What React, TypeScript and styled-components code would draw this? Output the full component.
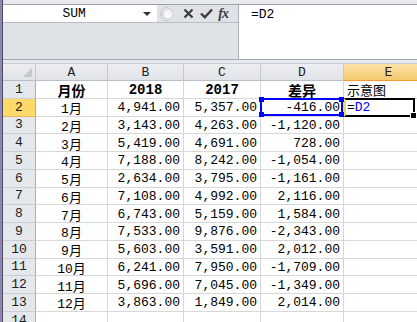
import React from 'react'
import styled, { createGlobalStyle, css } from 'styled-components'

const GlobalStyle = createGlobalStyle`
  html, body {
    margin: 0;
    padding: 0;
    background: #ffffff;
    overflow: hidden;
  }
  #root {
    width: 417px;
    height: 322px;
  }
`

const FONT = `"Liberation Mono", "Noto Sans CJK SC", monospace`

type Row = [string, string, string, string]

const rows: Row[] = [
  ['1月', '4,941.00', '5,357.00', '-416.00'],
  ['2月', '3,143.00', '4,263.00', '-1,120.00'],
  ['3月', '5,419.00', '4,691.00', '728.00'],
  ['4月', '7,188.00', '8,242.00', '-1,054.00'],
  ['5月', '2,634.00', '3,795.00', '-1,161.00'],
  ['6月', '7,108.00', '4,992.00', '2,116.00'],
  ['7月', '6,743.00', '5,159.00', '1,584.00'],
  ['8月', '7,533.00', '9,876.00', '-2,343.00'],
  ['9月', '5,603.00', '3,591.00', '2,012.00'],
  ['10月', '6,241.00', '7,950.00', '-1,709.00'],
  ['11月', '5,696.00', '7,045.00', '-1,349.00'],
  ['12月', '3,863.00', '1,849.00', '2,014.00'],
]

const COLS = ['A', 'B', 'C', 'D', 'E']

export default function App() {
  return (
    <>
      <GlobalStyle />
      <Window>
        <LeftEdge />
        <Main>
          <TopStrip />
          <FormulaBar>
            <Controls>
              <NameRow>
                <NameBox>
                  <NameText>SUM</NameText>
                  <DropArrow />
                </NameBox>
                <Splitter>
                  <svg width="14" height="16" viewBox="0 0 14 16">
                    <path d="M9 1 A7 7 0 0 0 9 15" fill="#eef0f3" stroke="#b9bec6" />
                    <circle cx="9" cy="8" r="5" fill="#f4f5f7" stroke="#c7ccd3" />
                    <rect x="6" y="9" width="6" height="1.5" fill="#ffffff" />
                  </svg>
                </Splitter>
                <ToolButton>
                  <svg width="11" height="11" viewBox="0 0 11 11">
                    <path d="M1.5 1.5 L9.5 9.5 M9.5 1.5 L1.5 9.5" stroke="#3c3c3c" strokeWidth="2.2" />
                  </svg>
                </ToolButton>
                <ToolButton>
                  <svg width="13" height="11" viewBox="0 0 13 11">
                    <path d="M1 5.5 L4.8 9.2 L12 1.5" stroke="#3c3c3c" strokeWidth="2.4" fill="none" />
                  </svg>
                </ToolButton>
                <FxButton>fx</FxButton>
              </NameRow>
            </Controls>
            <FormulaInput>=D2</FormulaInput>
          </FormulaBar>
          <Divider />
          <Sheet>
            <Corner>
              <CornerTriangle />
            </Corner>
            {COLS.map((c) => (
              <ColHead key={c} $active={c === 'E'}>
                {c}
              </ColHead>
            ))}

            <RowHead>1</RowHead>
            <Cell $align="center" $bold>月份</Cell>
            <Cell $align="center" $bold>2018</Cell>
            <Cell $align="center" $bold>2017</Cell>
            <Cell $align="center" $bold>差异</Cell>
            <Cell $align="left">示意图</Cell>

            {rows.map((r, i) => {
              const n = i + 2
              return (
                <React.Fragment key={n}>
                  <RowHead $active={n === 2}>{n}</RowHead>
                  <Cell $align="center">{r[0]}</Cell>
                  <Cell $align="right">{r[1]}</Cell>
                  <Cell $align="right">{r[2]}</Cell>
                  <Cell $align="right">
                    {r[3]}
                    {n === 2 && (
                      <RefBox>
                        <Handle $pos="tl" />
                        <Handle $pos="tr" />
                        <Handle $pos="bl" />
                        <Handle $pos="br" />
                      </RefBox>
                    )}
                  </Cell>
                  {n === 2 ? (
                    <Cell $align="left">
                      =<RefText>D2</RefText>
                      <ActiveBox>
                        <FillHandle />
                      </ActiveBox>
                    </Cell>
                  ) : (
                    <Cell $align="left" />
                  )}
                </React.Fragment>
              )
            })}

            <RowHead>14</RowHead>
            <Cell $align="left" />
            <Cell $align="left" />
            <Cell $align="left" />
            <Cell $align="left" />
            <Cell $align="left" />
          </Sheet>
        </Main>
      </Window>
    </>
  )
}

const Window = styled.div`
  display: flex;
  width: 417px;
  height: 322px;
  overflow: hidden;
  background: #ffffff;
`

const LeftEdge = styled.div`
  width: 2px;
  flex: none;
  background: #8f86b8;
  border-right: 1px solid #4c4c55;
`

const Main = styled.div`
  flex: 1;
  min-width: 0;
  display: flex;
  flex-direction: column;
`

const TopStrip = styled.div`
  height: 4px;
  flex: none;
  background: #e7e9ed;
  border-bottom: 1px solid #9ba2ab;
`

const FormulaBar = styled.div`
  height: 54px;
  flex: none;
  display: flex;
  background: #dfe3e8;
`

const Controls = styled.div`
  width: 235px;
  flex: none;
  display: flex;
  flex-direction: column;
`

const NameRow = styled.div`
  height: 17px;
  display: flex;
  align-items: center;
  border-bottom: 1px solid #b8bec6;
`

const NameBox = styled.div`
  width: 157px;
  height: 100%;
  display: flex;
  align-items: center;
  background: #ffffff;
`

const NameText = styled.div`
  flex: 1;
  text-align: center;
  font-family: "Liberation Mono", monospace;
  font-size: 13px;
  color: #000000;
  padding-left: 2px;
`

const DropArrow = styled.div`
  width: 0;
  height: 0;
  margin-right: 6px;
  border-left: 4px solid transparent;
  border-right: 4px solid transparent;
  border-top: 4px solid #333333;
`

const Splitter = styled.div`
  width: 22px;
  height: 100%;
  display: flex;
  align-items: center;
  padding-left: 2px;
  box-sizing: border-box;
`

const ToolButton = styled.div`
  width: 19px;
  height: 100%;
  display: flex;
  align-items: center;
  justify-content: center;
`

const FxButton = styled.div`
  width: 20px;
  padding-left: 2px;
  font-family: "Liberation Serif", serif;
  font-style: italic;
  font-weight: bold;
  font-size: 14px;
  color: #3c3c3c;
  letter-spacing: -1px;
`

const FormulaInput = styled.div`
  flex: 1;
  background: #ffffff;
  border-left: 1px solid #a9b0b8;
  padding: 1px 0 0 12px;
  font-family: ${FONT};
  font-size: 13px;
  line-height: 17px;
  color: #000000;
`

const Divider = styled.div`
  height: 3px;
  flex: none;
  background: #e6e9ed;
  border-top: 1px solid #a3a9b1;
  border-bottom: 1px solid #c8ccd2;
`

const Sheet = styled.div`
  flex: 1;
  display: grid;
  grid-template-columns: 33px 72px 76px 77px 83px 90px;
  grid-template-rows: 17px;
  grid-auto-rows: 17.75px;
  overflow: hidden;
  font-family: ${FONT};
  font-size: 13px;
  color: #000000;
`

const headBase = css`
  box-sizing: border-box;
  display: flex;
  align-items: center;
  justify-content: center;
  background: linear-gradient(#eceef1, #e0e3e8);
  border-right: 1px solid #c5cad1;
  border-bottom: 1px solid #b9bfc7;
  color: #222222;
`

const Corner = styled.div`
  ${headBase};
  position: relative;
`

const CornerTriangle = styled.div`
  position: absolute;
  right: 3px;
  bottom: 3px;
  width: 0;
  height: 0;
  border-left: 9px solid transparent;
  border-bottom: 9px solid #c3c8cf;
`

const ColHead = styled.div<{ $active?: boolean }>`
  ${headBase};
  ${({ $active }) =>
    $active &&
    css`
      background: linear-gradient(#fbe3a8, #f4c96d);
      border-right-color: #e9b65a;
      border-bottom: 1px solid #f29b38;
    `}
`

const RowHead = styled.div<{ $active?: boolean }>`
  ${headBase};
  background: #e4e7ec;
  border-bottom-color: #c9ced5;
  border-right-color: #a9afb8;
  ${({ $active }) =>
    $active &&
    css`
      background: #fdd96a;
      border-right: 1px solid #f29b38;
      border-bottom-color: #eab45a;
    `}
`

const Cell = styled.div<{ $align: 'left' | 'center' | 'right'; $bold?: boolean }>`
  position: relative;
  box-sizing: border-box;
  display: flex;
  align-items: center;
  white-space: nowrap;
  border-right: 1px solid #d7d7d7;
  border-bottom: 1px solid #d7d7d7;
  padding: 1px 3px 0 3px;
  justify-content: ${({ $align }) =>
    $align === 'left' ? 'flex-start' : $align === 'right' ? 'flex-end' : 'center'};
  font-weight: ${({ $bold }) => ($bold ? 'bold' : 'normal')};
  font-size: ${({ $bold }) => ($bold ? '14px' : '13px')};
`

const RefText = styled.span`
  color: #0000ff;
`

const RefBox = styled.div`
  position: absolute;
  left: -1px;
  top: -1px;
  right: 0;
  bottom: 0;
  border: 2px solid #0000ff;
  pointer-events: none;
`

const Handle = styled.div<{ $pos: 'tl' | 'tr' | 'bl' | 'br' }>`
  position: absolute;
  width: 5px;
  height: 5px;
  background: #0000ff;
  ${({ $pos }) => ($pos[0] === 't' ? 'top: -3px;' : 'bottom: -3px;')}
  ${({ $pos }) => ($pos[1] === 'l' ? 'left: -3px;' : 'right: -3px;')}
`

const ActiveBox = styled.div`
  position: absolute;
  left: 0;
  top: -1px;
  right: 18px;
  bottom: -1px;
  border: 2px solid #000000;
  border-left: 2px solid #e8e23a;
  pointer-events: none;
`

const FillHandle = styled.div`
  position: absolute;
  right: -4px;
  bottom: -4px;
  width: 5px;
  height: 5px;
  background: #000000;
  border: 1px solid #ffffff;
`
